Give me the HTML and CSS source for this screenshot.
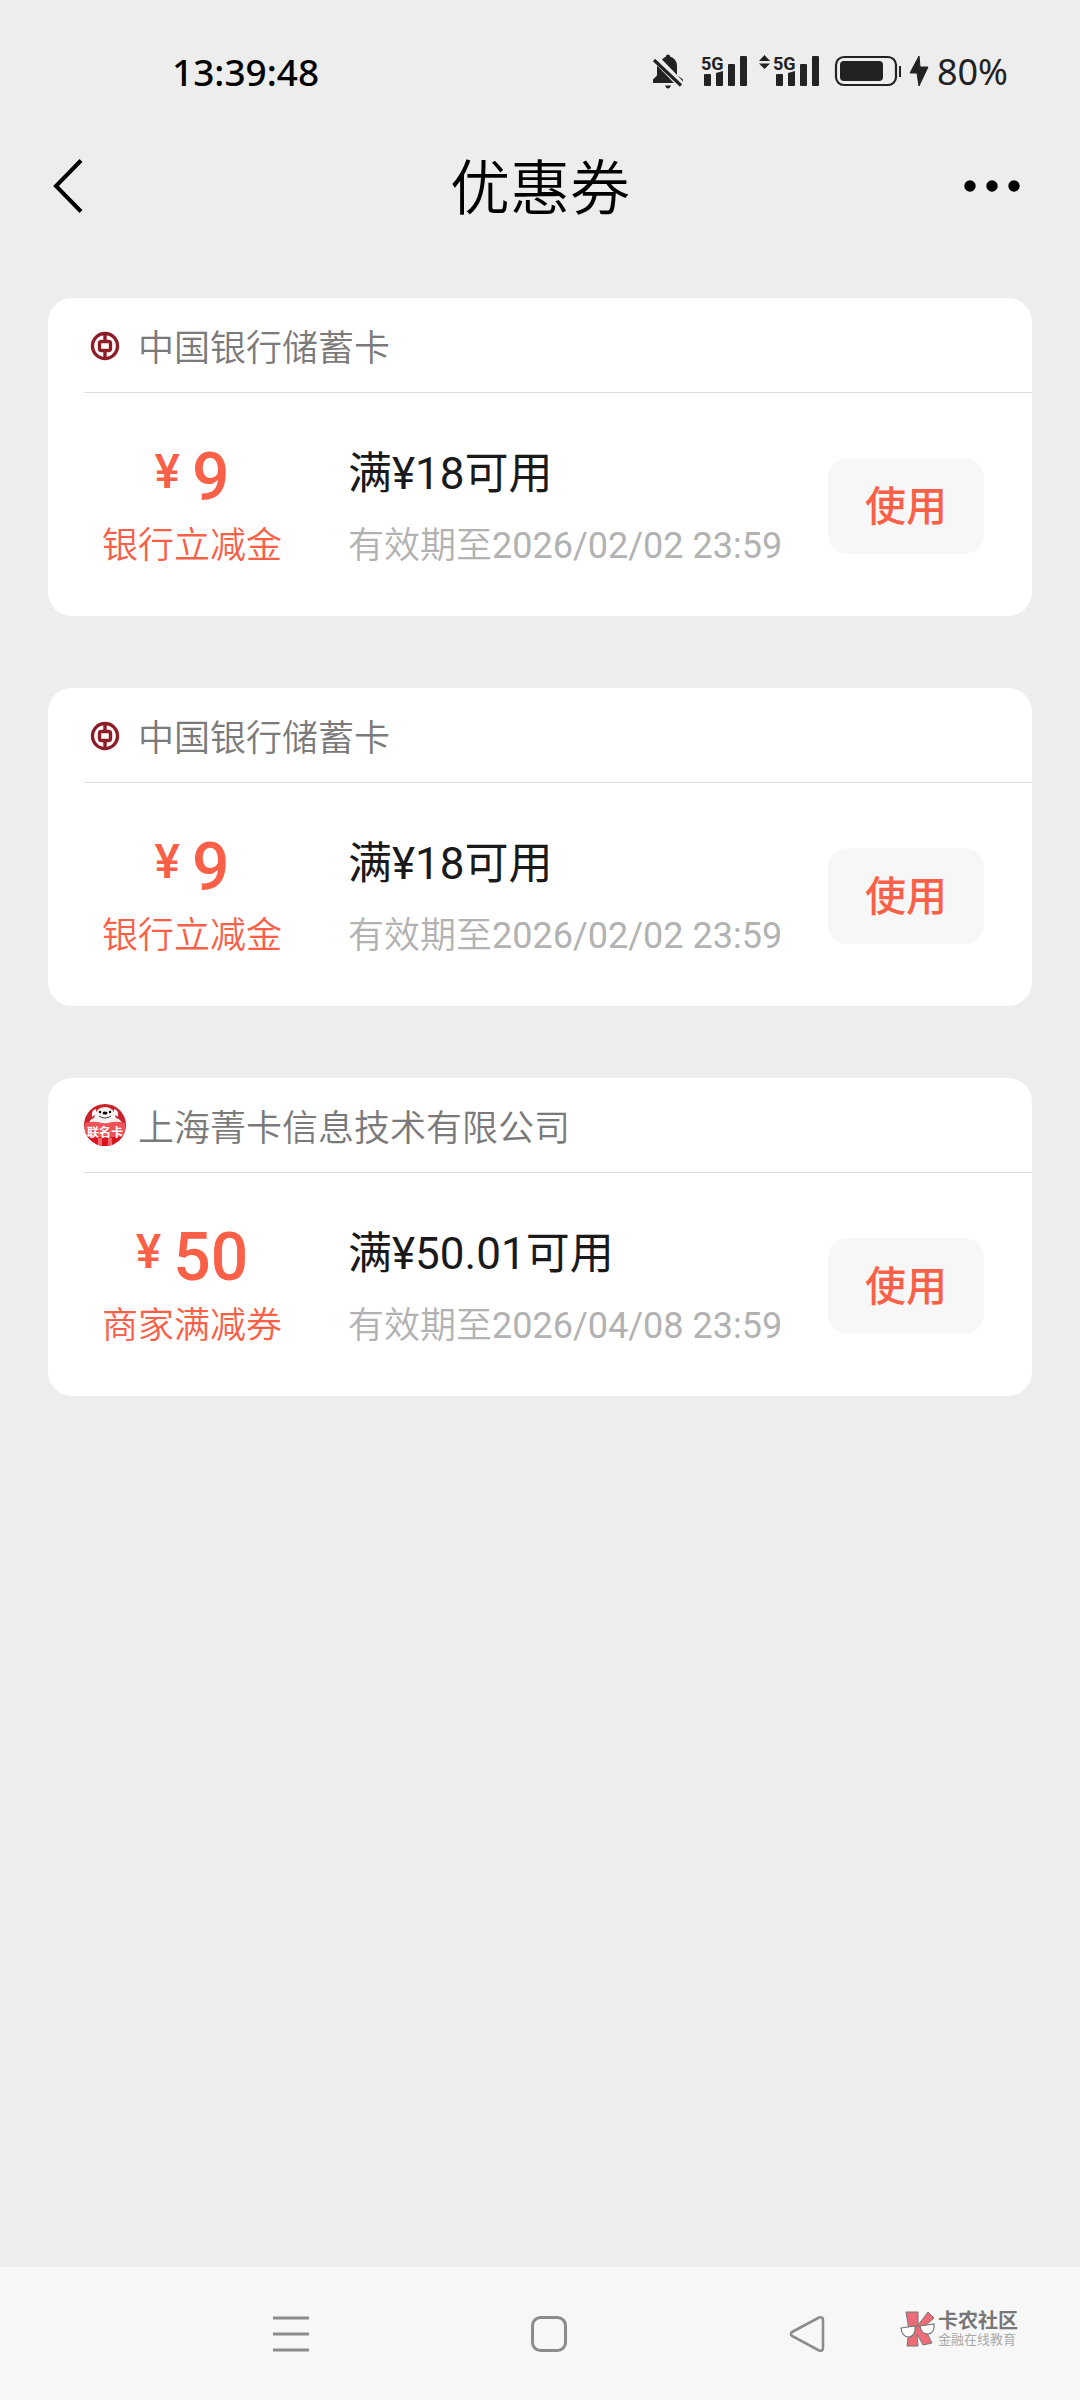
FILE: index.html
```html
<!DOCTYPE html>
<html lang="zh-CN">
<head>
<meta charset="utf-8">
<meta name="viewport" content="width=device-width, initial-scale=1">
<title>优惠券</title>
<link rel="stylesheet" href="styles.css">
</head>
<body>
<svg class="defs" aria-hidden="true">
  <symbol id="boc" viewBox="0 0 42 42">
    <g fill="none" stroke="#8f1d27" stroke-width="3.400">
      <circle cx="21" cy="22" r="12.500"/>
      <rect x="15.500" y="17.500" width="11" height="9" rx="2"/>
      <path d="M21 10v7M21 27v7"/>
    </g>
  </symbol>
</svg>
<div class="screen">
  <div class="status">
    <time class="clock">13:39:48</time>
    <div class="indicators">
      <svg width="40" height="34" viewBox="0 0 40 34" fill="#222">
        <path d="M13 1.500a2 2 0 0 1 .500-1.500q1.500-1 3 0a2 2 0 0 1 .500 1.500q7 2.500 7 9.500v9L9 4.500q2-2.200 4-3z"/>
        <path d="M4 10.500 21 28H0v-3.500l4-4z"/>
        <path d="M1 5 28 30.500" stroke="#222" stroke-width="3.200"/>
        <path d="M24 20l6 4.500v2z"/>
        <path d="M12 30.500h6q-1 3-3 3t-3-3z"/>
      </svg>
      <svg width="48" height="34" viewBox="0 0 48 34" fill="#222">
        <text class="net" x="0" y="15">5G</text>
        <rect x="3" y="19" width="7" height="12" rx="1"/>
        <path d="M15 18l7-2v14q0 1-1 1h-5q-1 0-1-1z"/>
        <rect x="27" y="9" width="7" height="22" rx="1"/>
        <rect x="39" y="1" width="7" height="30" rx="1"/>
      </svg>
      <svg width="68" height="34" viewBox="0 0 68 34" fill="#222">
        <path d="M7.500 0 13 6H2zM7.500 14 13 8.500H2z"/>
        <text class="net" x="16" y="15">5G</text>
        <rect x="19" y="19" width="7" height="12" rx="1"/>
        <path d="M31 18l7-2v14q0 1-1 1h-5q-1 0-1-1z"/>
        <rect x="43" y="9" width="7" height="22" rx="1"/>
        <rect x="55" y="1" width="7" height="30" rx="1"/>
      </svg>
      <svg width="68" height="34" viewBox="0 0 68 34">
        <rect x="3" y="2" width="60" height="28" rx="8" fill="none" stroke="#222" stroke-width="2.200"/>
        <rect x="7" y="6" width="43" height="20" rx="4" fill="#222"/>
        <rect x="66" y="11" width="2" height="11" fill="#222"/>
      </svg>
      <svg width="20" height="34" viewBox="0 0 20 34" fill="#222">
        <path d="M10 1 1 18h7l2 13 9-19h-8z" stroke="#222" stroke-linejoin="round"/>
      </svg>
      <span class="level">80%</span>
    </div>
  </div>

  <header class="topbar">
    <button class="icon-btn" type="button" aria-label="返回">
      <svg width="32" height="60" viewBox="0 0 32 60" fill="none" stroke="#000" stroke-width="4"><path d="M29 4.500 4 30l25 25.500"/></svg>
    </button>
    <h1 class="title">优惠券</h1>
    <button class="icon-btn" type="button" aria-label="更多">
      <svg width="60" height="12" viewBox="0 0 60 12"><circle cx="6" cy="6" r="5.700"/><circle cx="28" cy="6" r="5.700"/><circle cx="50" cy="6" r="5.700"/></svg>
    </button>
  </header>

  <main class="coupons">
    <article class="card">
      <div class="issuer"><svg width="42" height="42"><use href="#boc"/></svg><span>中国银行储蓄卡</span></div>
      <div class="body">
        <div class="worth">
          <div class="amount"><span class="yen">¥</span><span>9</span></div>
          <div class="kind">银行立减金</div>
        </div>
        <div class="terms">
          <div class="rule">满¥18可用</div>
          <div class="expiry">有效期至<time>2026/02/02 23:59</time></div>
        </div>
        <button class="use" type="button">使用</button>
      </div>
    </article>

    <article class="card">
      <div class="issuer"><svg width="42" height="42"><use href="#boc"/></svg><span>中国银行储蓄卡</span></div>
      <div class="body">
        <div class="worth">
          <div class="amount"><span class="yen">¥</span><span>9</span></div>
          <div class="kind">银行立减金</div>
        </div>
        <div class="terms">
          <div class="rule">满¥18可用</div>
          <div class="expiry">有效期至<time>2026/02/02 23:59</time></div>
        </div>
        <button class="use" type="button">使用</button>
      </div>
    </article>

    <article class="card">
      <div class="issuer">
        <svg width="42" height="42" viewBox="0 0 42 42">
          <clipPath id="disc"><circle cx="21" cy="21" r="21"/></clipPath>
          <g clip-path="url(#disc)">
            <rect width="42" height="42" fill="#c9232c"/>
            <path d="M5 19q1-4 5-5 2-11 11-11t11 11q5 1 6 6z" fill="#f7f2f2"/>
            <path d="M12 5q-5 1-4 8l4-3zM30 5q5 1 4 8l-4-3z" fill="#fff"/>
            <circle cx="16" cy="8" r="1.200"/><circle cx="26" cy="8" r="1.200"/>
            <ellipse cx="21" cy="9" rx="2.500" ry="1.600"/>
            <path d="M15 12q6 4 12 0" fill="none" stroke="#444"/>
            <path d="M1 19q10-3 20 1 10-4 20-1v16H1z" fill="#f0525a"/>
            <path d="M3 33h36v9H3z" fill="#dc1420"/>
            <path d="M14 34h4v8h-4zM24 34h4v8h-4z" fill="#f0686c"/>
            <text class="badge" x="21" y="33" text-anchor="middle">联名卡</text>
          </g>
        </svg>
        <span>上海菁卡信息技术有限公司</span>
      </div>
      <div class="body">
        <div class="worth">
          <div class="amount"><span class="yen">¥</span><span>50</span></div>
          <div class="kind">商家满减券</div>
        </div>
        <div class="terms">
          <div class="rule">满¥50.01可用</div>
          <div class="expiry">有效期至<time>2026/04/08 23:59</time></div>
        </div>
        <button class="use" type="button">使用</button>
      </div>
    </article>
  </main>

  <nav class="sysnav">
    <button class="icon-btn" type="button" aria-label="最近任务">
      <svg width="36" height="38" viewBox="0 0 36 38" stroke="#8c8c8c" stroke-width="3"><path d="M0 3h36M0 19h36M0 35h36"/></svg>
    </button>
    <button class="icon-btn" type="button" aria-label="主屏幕">
      <svg width="38" height="38" viewBox="0 0 38 38" fill="none" stroke="#8c8c8c" stroke-width="3"><rect x="2.500" y="2.500" width="33" height="33" rx="8"/></svg>
    </button>
    <button class="icon-btn" type="button" aria-label="返回上一级">
      <svg width="36" height="38" viewBox="0 0 36 38" fill="none" stroke="#8c8c8c" stroke-width="2.600"><path d="M3 17 30 2.500q4-1 4 2.500v28q0 3.500-4 2.500L3 21q-2-2 0-4z"/></svg>
    </button>
    <div class="mark">
      <svg width="36" height="36" viewBox="0 0 36 36">
        <g fill="#ee6c78" stroke="#777" stroke-width="1">
          <path d="M6 1h12v13L28 1l6 6-10 9 8 16-9 2-6-11 1 12H7l2-16z"/>
        </g>
        <g fill="#fff" stroke="#777" stroke-width="1.200">
          <path d="M1 17l14-2q1 10-6 11-7 0-8-9z"/>
          <path d="M20 15l14-2q1 9-6 10-7 0-8-8z"/>
          <path d="M15 16q3-2 5 0" fill="none"/>
        </g>
      </svg>
      <div>
        <div class="mark-name">卡农社区</div>
        <div class="mark-sub">金融在线教育</div>
      </div>
    </div>
  </nav>
</div>
</body>
</html>
```
FILE: styles.css
```css
* {
  box-sizing: border-box;
}

body {
  margin: 0;
  background: #ededed;
  color: #1a1a1a;
  font-family: Roboto, "Noto Sans CJK SC", sans-serif;
}

svg {
  display: block;
  flex: none;
}

button {
  padding: 0;
  border: 0;
  font: inherit;
  cursor: pointer;
}

.defs {
  position: absolute;
  width: 0;
  height: 0;
}

.screen {
  display: flex;
  flex-direction: column;
  min-height: 100vh;
}

/* Status bar */
.status {
  display: flex;
  justify-content: space-between;
  align-items: center;
  height: 120px;
  padding: 24px 72px 0 172px;
  font-family: "Noto Sans", sans-serif;
  font-size: 36px;
  line-height: 48px;
}

.clock {
  color: #000;
  font-size: 37px;
  font-weight: 500;
}

.indicators {
  display: flex;
  align-items: center;
  gap: 8px;
  color: #222;
}

.net {
  font-family: Roboto, sans-serif;
  font-size: 18px;
  font-weight: 700;
}

.indicators svg {
  overflow: visible;
}

/* Title bar */
.topbar {
  display: flex;
  justify-content: space-between;
  align-items: center;
  height: 132px;
  padding: 0 52px;
}

.icon-btn {
  display: flex;
  align-items: center;
  justify-content: center;
  background: none;
}

.topbar .icon-btn {
  width: 68px;
  height: 60px;
}

.topbar .icon-btn:first-child {
  justify-content: flex-start;
}

.title {
  margin: 0;
  padding-top: 8px;
  color: #000;
  font-size: 60px;
  font-weight: 350;
  line-height: 72px;
}

/* Coupons */
.coupons {
  display: flex;
  flex: 1;
  flex-direction: column;
  gap: 72px;
  padding: 46px 48px;
}

.card {
  border-radius: 24px;
  background: #fff;
}

.issuer {
  display: flex;
  align-items: center;
  gap: 12px;
  height: 95px;
  margin-left: 36px;
  border-bottom: 1px solid #dedede;
  color: #7a7a7a;
  font-size: 36px;
  font-weight: 350;
}

.badge {
  fill: #fff;
  font-size: 12px;
  font-weight: 700;
}

.body {
  display: flex;
  align-items: center;
  height: 223px;
  padding: 2px 48px 0 36px;
}

.worth {
  display: flex;
  flex-direction: column;
  gap: 8px;
  width: 216px;
  margin-right: 48px;
  color: #fa6048;
  text-align: center;
}

.amount {
  display: flex;
  justify-content: center;
  gap: 12px;
  font-size: 66px;
  font-weight: 500;
  line-height: 72px;
}

.yen {
  font-size: 48px;
  line-height: 60px;
}

.kind,
.expiry {
  font-size: 36px;
  font-weight: 350;
  line-height: 48px;
}

.terms {
  display: flex;
  flex: 1;
  flex-direction: column;
  gap: 16px;
  white-space: nowrap;
}

.rule {
  font-size: 44px;
  line-height: 64px;
}

.expiry {
  color: #b2b2b2;
}

.expiry time {
  font-weight: 400;
}

.use {
  width: 156px;
  height: 96px;
  padding-bottom: 6px;
  border-radius: 20px;
  background: #f7f7f7;
  color: #fa6048;
  font-size: 41px;
  font-weight: 500;
}

/* System navigation */
.sysnav {
  position: relative;
  display: grid;
  grid-template-columns: repeat(3, 1fr);
  height: 133px;
  padding: 0 144px 0 162px;
  background: #f7f7f7;
}

.mark {
  position: absolute;
  right: 62px;
  bottom: 52px;
  display: flex;
  align-items: center;
  gap: 2px;
  color: #777;
}

.mark-name {
  font-size: 20px;
  font-weight: 700;
  line-height: 22px;
}

.mark-sub {
  color: #aaa;
  font-size: 13px;
  line-height: 16px;
}
```
